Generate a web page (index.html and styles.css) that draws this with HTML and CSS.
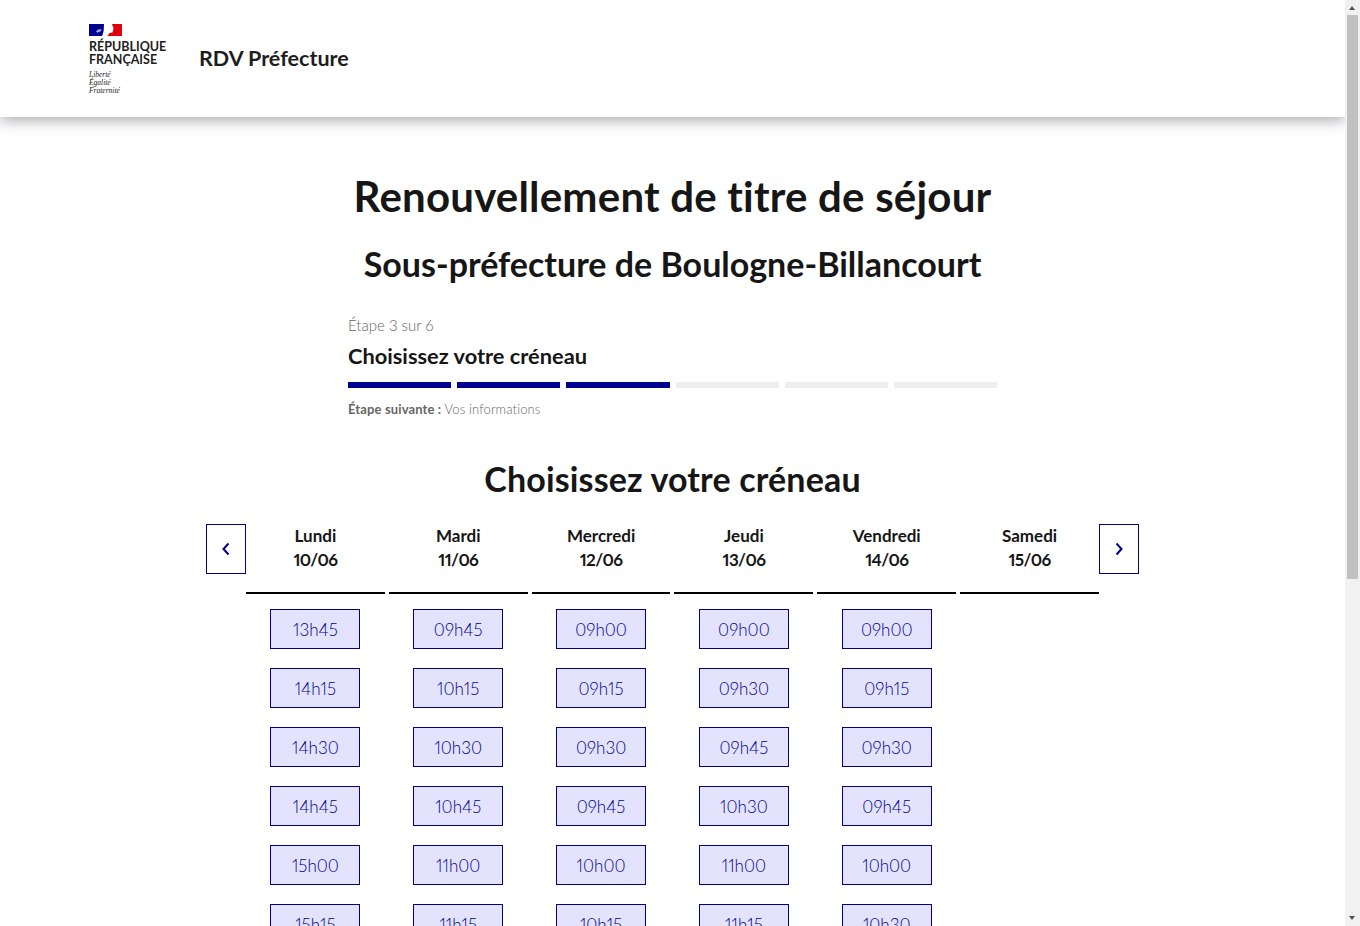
FILE: index.html
```html
<!DOCTYPE html>
<html lang="fr">
<head>
    <meta charset="UTF-8">
    <meta name="viewport" content="width=device-width, initial-scale=1.0">
    <title>RDV Préfecture</title>
    <link rel="stylesheet" href="styles.css">
</head>
<body>
<header class="site-header">
    <div class="logo">
        <svg class="flag" width="33" height="12" viewBox="0 0 33 12">
            <rect width="33" height="12" fill="#fff"/>
            <path d="M0 0h15c-.2 3 .2 8-2 12H0z" fill="#000091"/>
            <path d="M33 0h-10c.5 1 .5 2 1 3l.8 1.500-.8.6.3 1.200-.6.6.1 1.400c-1 .6-2.500.5-3.500 1l-1.800 2.700H33z" fill="#e1000f"/>
            <path d="M7 7.500c1-1.200 2-2.200 3.500-2.300 1 0 1.500.4 2.300.4-.8 1.300-1.700 2.200-3 2.500-.7.200-1 .5-1.400.8-.2-.6-.4-.8-.7-.9-.3-.1-.5-.3-.7-.5z" fill="#a9a9d8"/>
        </svg>
        <div class="logo-name">RÉPUBLIQUE<br>FRANÇAISE</div>
        <div class="logo-motto">Liberté<br>Égalité<br>Fraternité</div>
    </div>
    <div class="site-title">RDV Préfecture</div>
</header>

<main class="page">
    <h1>Renouvellement de titre de séjour</h1>
    <h2 class="place">Sous-préfecture de Boulogne-Billancourt</h2>

    <section class="stepper">
        <div class="step-count">Étape 3 sur 6</div>
        <div class="step-title">Choisissez votre créneau</div>
        <div class="step-bars">
            <span class="bar done"></span>
            <span class="bar done"></span>
            <span class="bar done"></span>
            <span class="bar"></span>
            <span class="bar"></span>
            <span class="bar"></span>
        </div>
        <div class="step-next"><b>Étape suivante :</b> Vos informations</div>
    </section>

    <h2 class="slots-title">Choisissez votre créneau</h2>

    <section class="calendar">
        <button class="arrow" aria-label="Précédent">
            <svg width="12" height="14" viewBox="0 0 12 14"><path d="M8.500 1.500 3.500 7l5 5.500" fill="none" stroke="#000091" stroke-width="2"/></svg>
        </button>
        <div class="days">
            <div class="day">
                <div class="day-head">Lundi<br><span class="date">10/06</span></div>
                <a class="slot">13h45</a><a class="slot">14h15</a><a class="slot">14h30</a><a class="slot">14h45</a><a class="slot">15h00</a><a class="slot">15h15</a>
            </div>
            <div class="day">
                <div class="day-head">Mardi<br><span class="date">11/06</span></div>
                <a class="slot">09h45</a><a class="slot">10h15</a><a class="slot">10h30</a><a class="slot">10h45</a><a class="slot">11h00</a><a class="slot">11h15</a>
            </div>
            <div class="day">
                <div class="day-head">Mercredi<br><span class="date">12/06</span></div>
                <a class="slot">09h00</a><a class="slot">09h15</a><a class="slot">09h30</a><a class="slot">09h45</a><a class="slot">10h00</a><a class="slot">10h15</a>
            </div>
            <div class="day">
                <div class="day-head">Jeudi<br><span class="date">13/06</span></div>
                <a class="slot">09h00</a><a class="slot">09h30</a><a class="slot">09h45</a><a class="slot">10h30</a><a class="slot">11h00</a><a class="slot">11h15</a>
            </div>
            <div class="day">
                <div class="day-head">Vendredi<br><span class="date">14/06</span></div>
                <a class="slot">09h00</a><a class="slot">09h15</a><a class="slot">09h30</a><a class="slot">09h45</a><a class="slot">10h00</a><a class="slot">10h30</a>
            </div>
            <div class="day">
                <div class="day-head">Samedi<br><span class="date">15/06</span></div>
            </div>
        </div>
        <button class="arrow" aria-label="Suivant">
            <svg width="12" height="14" viewBox="0 0 12 14"><path d="M3.500 1.500 8.500 7l-5 5.500" fill="none" stroke="#000091" stroke-width="2"/></svg>
        </button>
    </section>
</main>

<div class="scrollbar">
    <span class="scroll-up"></span>
    <span class="scroll-thumb"></span>
    <span class="scroll-down"></span>
</div>
</body>
</html>
```
FILE: styles.css
```css
html, body {
    margin: 0;
    padding: 0;
    height: 100%;
    overflow: hidden;
}

body {
    padding-right: 15px;
    box-sizing: border-box;
    font-family: "Lato", "Noto Sans", sans-serif;
    font-feature-settings: "pnum";
    color: #161616;
    background: #fff;
}

/* the browser hides its own bar when photographed */
.scrollbar {
    position: fixed;
    top: 0;
    right: 0;
    bottom: 0;
    width: 15px;
    background: #f1f1f1;
}

.scroll-thumb {
    position: absolute;
    top: 15px;
    left: 2px;
    width: 11px;
    height: 564px;
    background: #c1c1c1;
}

.scroll-up, .scroll-down {
    position: absolute;
    left: 4px;
    border-left: 3.500px solid transparent;
    border-right: 3.500px solid transparent;
}

.scroll-up {
    top: 6px;
    border-bottom: 4px solid #505050;
}

.scroll-down {
    bottom: 6px;
    border-top: 4px solid #505050;
}

.site-header {
    display: flex;
    align-items: center;
    height: 117px;
    padding-left: 89px;
    box-sizing: border-box;
    box-shadow: 0 3px 14px rgba(0, 0, 18, 0.35);
}

.logo {
    width: 110px;
    padding-top: 1px;
}

.flag {
    display: block;
    margin-bottom: 4px;
}

.logo-name {
    font-size: 12.500px;
    line-height: 13px;
    font-weight: 700;
    color: #1e1e1e;
}

.logo-motto {
    margin-top: 5px;
    font-family: "Liberation Serif", serif;
    font-size: 7.500px;
    line-height: 8px;
    font-style: italic;
    color: #222;
}

.site-title {
    margin-bottom: 2px;
    font-size: 21.500px;
    font-weight: 700;
    color: #1e1e1e;
}

.page {
    padding-top: 55px;
}

h1 {
    margin: 0;
    text-align: center;
    font-size: 42px;
    line-height: 48px;
    font-weight: 700;
    letter-spacing: 0.2px;
}

.place {
    margin: 24px 0 0;
    text-align: center;
    font-size: 34px;
    line-height: 40px;
    font-weight: 700;
}

.stepper {
    width: 649px;
    margin: 29px auto 0;
}

.step-count {
    font-size: 15px;
    line-height: 24px;
    color: #666;
    font-weight: 300;
}

.step-title {
    margin-top: 5px;
    font-size: 21.800px;
    line-height: 28px;
    font-weight: 700;
}

.step-bars {
    display: flex;
    gap: 6px;
    margin-top: 12px;
}

.bar {
    flex: 1;
    height: 6px;
    background: #eee;
}

.bar.done {
    background: #000091;
}

.step-next {
    margin-top: 11px;
    font-size: 13px;
    line-height: 20px;
    letter-spacing: 0.13px;
    color: #666;
    font-weight: 300;
}

.step-next b {
    color: #666;
    font-weight: 700;
}

.slots-title {
    margin: 40px 0 0;
    text-align: center;
    font-size: 34px;
    line-height: 40px;
    font-weight: 700;
    letter-spacing: 0.15px;
}

.calendar {
    display: flex;
    align-items: flex-start;
    width: 933px;
    margin: 25px auto 0;
}

.arrow {
    flex: none;
    display: flex;
    align-items: center;
    justify-content: center;
    width: 40px;
    height: 50px;
    padding: 0;
    background: #fff;
    border: 1px solid #000091;
}

.days {
    flex: 1;
    display: grid;
    grid-template-columns: repeat(6, 1fr);
    column-gap: 4px;
}

.day {
    display: flex;
    flex-direction: column;
    align-items: center;
}

.day-head {
    width: 100%;
    height: 68px;
    margin-bottom: 15px;
    border-bottom: 2px solid #000;
    text-align: center;
    font-size: 17px;
    line-height: 24px;
    font-weight: 700;
}

.date {
    letter-spacing: -0.6px;
}

.slot {
    display: flex;
    align-items: center;
    justify-content: center;
    width: 90px;
    height: 40px;
    margin-bottom: 19px;
    box-sizing: border-box;
    background: #e3e3fd;
    border: 1px solid #000091;
    color: #000091;
    font-size: 17px;
    font-weight: 300;
}
```
